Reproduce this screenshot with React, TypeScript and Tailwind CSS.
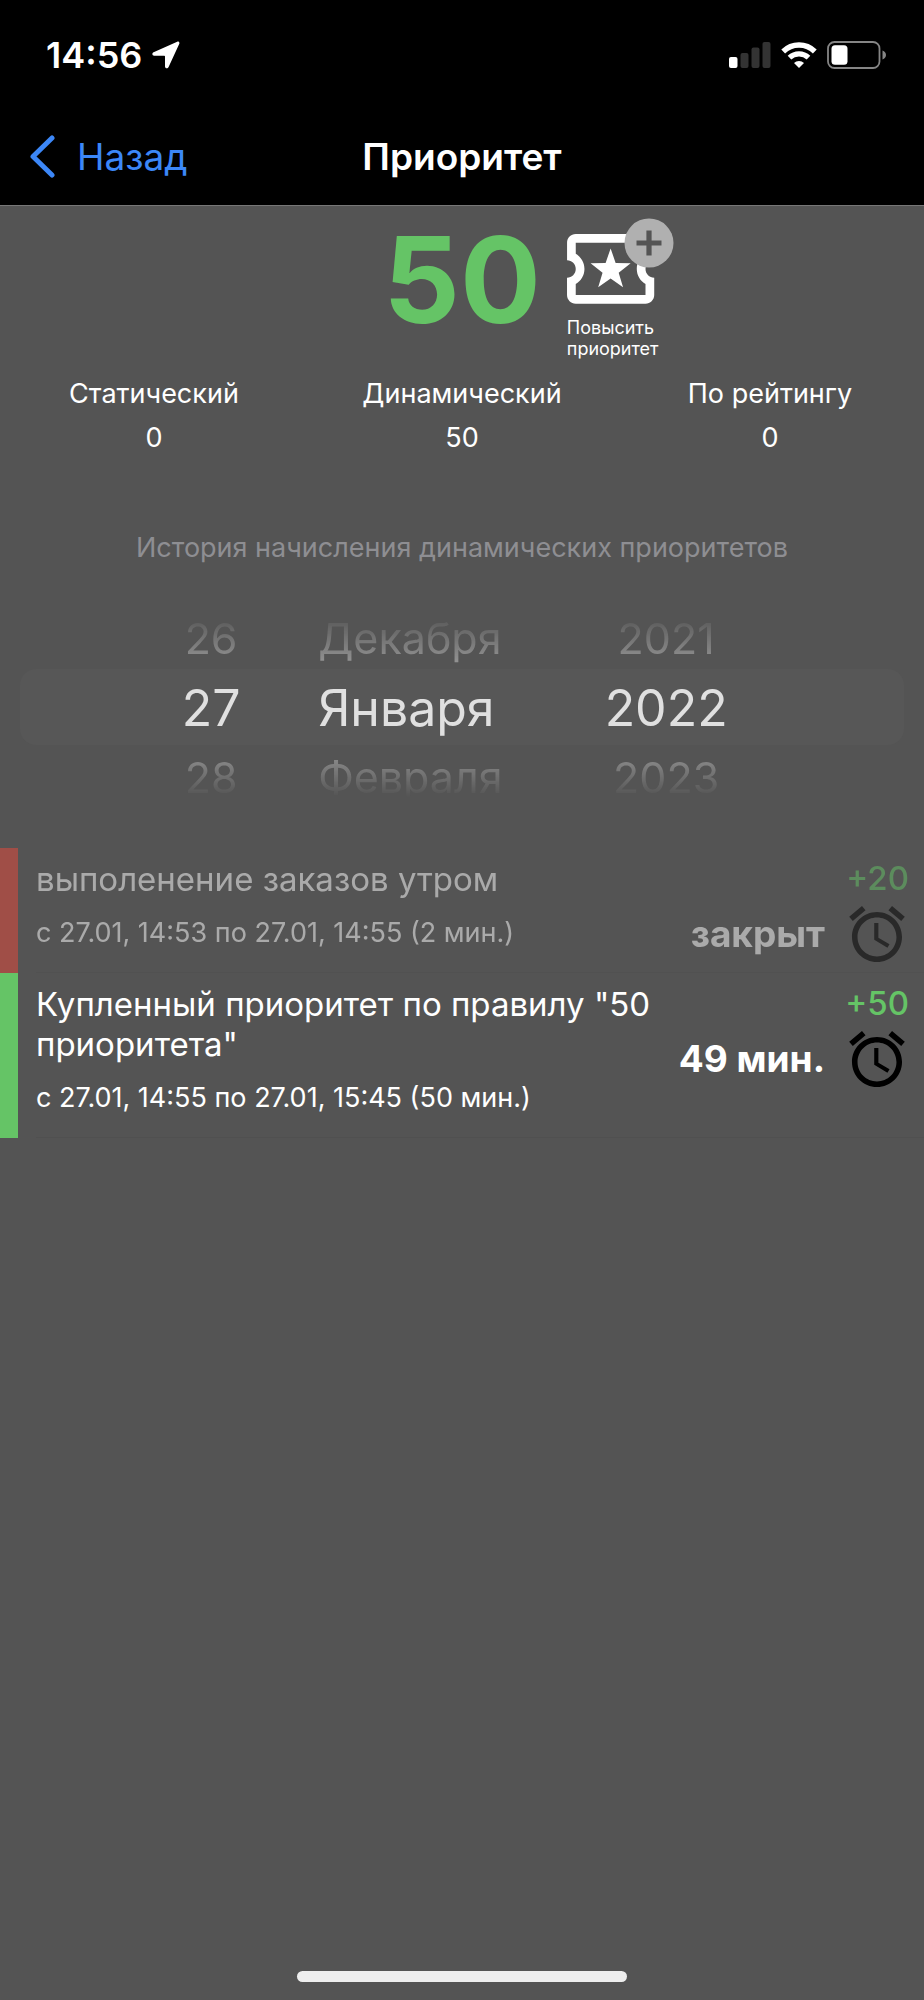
import React from "react";

const GREEN = "text-[#65c466]";

function LocationArrow() {
  return (
    <svg className="h-7 w-7" viewBox="0 0 28 28" fill="#fff" aria-hidden="true">
      <path d="M25.200.7 1.600 11.200C-.3 12.100.1 14.800 2.200 14.800H12.300C12.800 14.800 13 15 13 15.500V25.500C13 27.600 15.700 28 16.600 26.100L27.300 2.700C27.900 1.300 26.600.1 25.200.7Z" />
    </svg>
  );
}

function StatusIcons() {
  return (
    <div className="flex items-center gap-[10px]">
      <svg className="h-[26px] w-[42px]" viewBox="0 0 42 26" aria-label="Сигнал сети">
        <rect x="0" y="15" width="8.500" height="11" rx="2" fill="#fff" />
        <rect x="11.500" y="11" width="8" height="15" rx="2" fill="#333" />
        <rect x="22.500" y="5.500" width="8" height="20.500" rx="2" fill="#333" />
        <rect x="33.500" y="0" width="8" height="26" rx="2" fill="#333" />
      </svg>
      <svg className="h-[26px] w-9" viewBox="0 0 36 26" fill="none" aria-label="Wi-Fi">
        <path d="M2.200 9.200A22.500 22.500 0 0 1 33.800 9.200" stroke="#fff" strokeWidth="5.400" transform="translate(0 .3)" />
        <path d="M8.500 15.700A13.700 13.700 0 0 1 27.500 15.700" stroke="#fff" strokeWidth="5.200" />
        <path d="M18 26 13 20.900A7.200 7.200 0 0 1 23 20.900Z" fill="#fff" />
      </svg>
      <svg className="h-7 w-[60px]" viewBox="0 0 60 28" aria-label="Заряд батареи">
        <rect x="1" y="1" width="51.500" height="26" rx="6.500" fill="none" stroke="#858585" strokeWidth="1.800" />
        <rect x="4.500" y="4.300" width="16" height="19.400" rx="3.500" fill="#fff" />
        <path d="M55.500 9.500C57.600 10.300 59 12 59 14S57.600 17.700 55.500 18.500Z" fill="#858585" />
      </svg>
    </div>
  );
}

function TicketIcon() {
  return (
    <svg className="h-[87px] w-[108px]" viewBox="0 0 108 87" aria-hidden="true">
      <g transform="translate(-8.7 -1.4) scale(4.36)" fill="#fff">
        <path d="M22 10V6c0-1.110-.9-2-2-2H4c-1.100 0-1.990.89-1.990 2v4c1.100 0 1.990.9 1.990 2s-.89 2-2 2v4c0 1.100.9 2 2 2h16c1.100 0 2-.9 2-2v-4c-1.100 0-2-.9-2-2s.9-2 2-2zm-2-1.460c-1.190.69-2 1.990-2 3.460s.81 2.770 2 3.460V18H4v-2.540c1.190-.69 2-1.990 2-3.460 0-1.480-.8-2.770-1.990-3.460L4 6h16v2.540z" />
        <path d="M12 7.300 13.150 10.620 16.600 10.700 13.850 12.850 14.850 16.180 12 14.200 9.150 16.180 10.150 12.850 7.400 10.700 10.850 10.620Z" />
      </g>
      <circle cx="82" cy="25" r="24.500" fill="#b0b0b0" />
      <path d="M82 12.500V37.500M69.500 25H94.500" stroke="#545454" strokeWidth="5.200" />
    </svg>
  );
}

function AlarmIcon() {
  return (
    <svg className="h-14 w-14" viewBox="2 1.86 20 20.14" fill="#000" aria-hidden="true">
      <path d="M22 5.720l-4.600-3.860-1.290 1.530 4.600 3.860L22 5.720zM7.880 3.390L6.600 1.860 2 5.710l1.290 1.530 4.590-3.850zM12.500 8H11v6l4.750 2.850.75-1.230-4-2.370V8zM12 4c-4.970 0-9 4.030-9 9s4.020 9 9 9c4.970 0 9-4.030 9-9s-4.030-9-9-9zm0 16c-3.870 0-7-3.130-7-7s3.130-7 7-7 7 3.130 7 7-3.130 7-7 7z" />
    </svg>
  );
}

const stats = [
  { label: "Статический", value: 0 },
  { label: "Динамический", value: 50 },
  { label: "По рейтингу", value: 0 },
];

const wheel = [
  { label: "День", values: ["26", "27", "28"], align: "text-center" },
  { label: "Месяц", values: ["Декабря", "Января", "Февраля"], align: "text-left" },
  { label: "Год", values: ["2021", "2022", "2023"], align: "text-center" },
];

const wheelRow = [
  "h-16 text-[43px] leading-[66px] text-[#969696] [mask-image:linear-gradient(to_bottom,transparent_8px,black_60px)]",
  "h-[76px] text-[50px] leading-[78px] text-[#e0e0e0]",
  "h-16 text-[43px] leading-[64px] text-[#969696] [mask-image:linear-gradient(to_top,transparent_12px,black_60px)]",
];

const history = [
  {
    title: "выполенение заказов утром",
    period: "с 27.01, 14:53 по 27.01, 14:55 (2 мин.)",
    amount: "+20",
    status: "закрыт",
    active: false,
  },
  {
    title: 'Купленный приоритет по правилу "50 приоритета"',
    period: "с 27.01, 14:55 по 27.01, 15:45 (50 мин.)",
    amount: "+50",
    status: "49 мин.",
    active: true,
  },
];

export default function App() {
  return (
    <div className="flex min-h-screen flex-col bg-[#545454] font-['Inter','Noto_Sans',sans-serif] text-white">
      <header className="border-b border-[#777] bg-black">
        <div className="flex h-[110px] items-center justify-between pl-[46px] pr-[37px]">
          <div className="flex items-center gap-[10px]">
            <span className="text-[36px] font-semibold leading-10">14:56</span>
            <LocationArrow />
          </div>
          <StatusIcons />
        </div>
        <div className="grid h-[95px] grid-cols-[1fr_auto_1fr] items-center px-[29px] pb-[2px]">
          <button type="button" className="flex items-center gap-[22px] justify-self-start text-[37px] leading-[44px] text-[#3c87f7]">
            <svg className="h-[43px] w-[26px]" viewBox="0 0 26 43" fill="none" aria-hidden="true">
              <path d="M23 3 4 21.500 23 40" stroke="currentColor" strokeWidth="5" strokeLinecap="round" strokeLinejoin="round" />
            </svg>
            Назад
          </button>
          <h1 className="text-[37px] font-semibold leading-[44px]">Приоритет</h1>
        </div>
      </header>

      <main className="flex-1">
        <section className="grid grid-cols-[1fr_auto_1fr] items-start gap-x-[26px] pt-3">
          <p className={`col-start-2 text-[120px] font-bold leading-[124px] ${GREEN}`}>50</p>
          <button type="button" className="flex flex-col items-start gap-3 justify-self-start text-left text-[18px] leading-[21px]">
            <TicketIcon />
            <span>
              Повысить
              <br />
              приоритет
            </span>
          </button>
        </section>

        <dl className="mt-[13px] grid grid-cols-3 text-center text-[27px] leading-[44px]">
          {stats.map((s) => (
            <div key={s.label}>
              <dt>{s.label}</dt>
              <dd>{s.value}</dd>
            </div>
          ))}
        </dl>

        <h2 className="mt-[66px] text-center text-[27px] leading-[44px] text-[#8e8e92]">
          История начисления динамических приоритетов
        </h2>

        <div className="relative mt-[35px]">
          <div className="absolute inset-x-5 top-16 h-[76px] rounded-2xl bg-[#575757]" />
          <div className="relative grid grid-cols-[4fr_4fr_5fr] pl-[104px] pr-[124px]">
            {wheel.map((col) => (
              <div key={col.label} role="listbox" aria-label={col.label}>
                {col.values.map((v, i) => (
                  <div key={v} role="option" aria-selected={i === 1} className={`${wheelRow[i]} ${col.align}`}>
                    {v}
                  </div>
                ))}
              </div>
            ))}
          </div>
        </div>

        <ul className="mt-[39px]">
          {history.map((h) => (
            <li key={h.title} className="flex">
              <div className={`w-[18px] shrink-0 ${h.active ? "bg-[#65c466]" : "bg-[#a04e47]"}`} />
              <div className={`ml-[18px] flex flex-1 border-b border-[#505050] ${h.active ? "" : "opacity-50"}`}>
                <div className="flex flex-1 flex-col gap-[18px] pb-[23px] pt-[11px]">
                  <h3 className="text-[33px] leading-10">{h.title}</h3>
                  <p className="text-[27px] leading-8">{h.period}</p>
                </div>
                <div className="flex shrink-0 flex-col items-end gap-2 pr-[15px] pt-[10px]">
                  <span className={`text-[33px] font-medium leading-10 ${GREEN}`}>{h.amount}</span>
                  <div className="flex items-center gap-6 pr-1">
                    <span className="text-[37px] font-bold leading-10">{h.status}</span>
                    <AlarmIcon />
                  </div>
                </div>
              </div>
            </li>
          ))}
        </ul>
      </main>

      <footer className="flex justify-center pb-[18px]">
        <div className="h-[11px] w-[330px] rounded-full bg-[#eee]" />
      </footer>
    </div>
  );
}
